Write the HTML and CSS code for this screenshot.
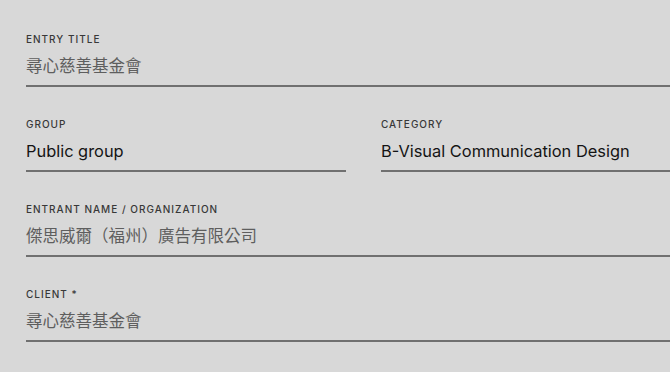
FILE: index.html
```html
<!DOCTYPE html>
<html lang="zh-Hant">
<head>
    <meta charset="UTF-8">
    <meta name="viewport" content="width=device-width, initial-scale=1.0">
    <title>Entry</title>
    <link rel="stylesheet" href="styles.css">
</head>
<body>
    <div class="form">
        <div class="field">
            <div class="label">Entry title</div>
            <div class="value cjk">尋心慈善基金會</div>
        </div>

        <div class="row">
            <div class="field">
                <div class="label">Group</div>
                <div class="value">Public group</div>
            </div>
            <div class="field">
                <div class="label">Category</div>
                <div class="value">B-Visual Communication Design</div>
            </div>
        </div>

        <div class="field">
            <div class="label">Entrant name / organization</div>
            <div class="value cjk">傑思威爾（福州）廣告有限公司</div>
        </div>

        <div class="field">
            <div class="label">Client *</div>
            <div class="value cjk">尋心慈善基金會</div>
        </div>
    </div>
</body>
</html>
```

FILE: styles.css
```css
body {
    margin: 0;
    padding: 33px 0 0 26px;
    background-color: #d8d8d8;
    font-family: Inter, "Noto Sans CJK TC", sans-serif;
    overflow: hidden;
}
.form {
    display: flex;
    flex-direction: column;
    gap: 31px;
}
.row {
    display: grid;
    grid-template-columns: 320px 1fr;
    gap: 35px;
}
.field {
    border-bottom: 2px solid #707070;
    padding-bottom: 7px;
}
.label {
    font-size: 10px;
    font-weight: 500;
    line-height: 12px;
    letter-spacing: 1px;
    text-transform: uppercase;
    color: #383838;
    margin-bottom: 9px;
}
.value {
    font-size: 16.4px;
    line-height: 24px;
    color: #141414;
}
.cjk {
    font-size: 16.5px;
    color: #5e5e5e;
}
```
